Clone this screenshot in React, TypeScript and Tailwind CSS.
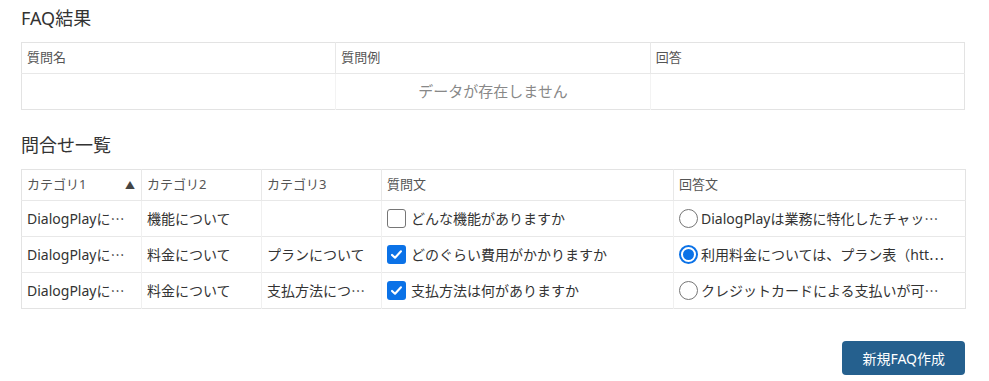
import React from "react";

const font = { fontFamily: '"Noto Sans", "Noto Sans CJK JP", sans-serif' };

interface Inquiry {
  cat1: string;
  cat2: string;
  cat3: string;
  question: string;
  answer: string;
  qChecked: boolean;
  aChecked: boolean;
}

const rows: Inquiry[] = [
  {
    cat1: "DialogPlayに⋯",
    cat2: "機能について",
    cat3: "",
    question: "どんな機能がありますか",
    answer: "DialogPlayは業務に特化したチャッ⋯",
    qChecked: false,
    aChecked: false,
  },
  {
    cat1: "DialogPlayに⋯",
    cat2: "料金について",
    cat3: "プランについて",
    question: "どのぐらい費用がかかりますか",
    answer: "利用料金については、プラン表（htt⋯",
    qChecked: true,
    aChecked: true,
  },
  {
    cat1: "DialogPlayに⋯",
    cat2: "料金について",
    cat3: "支払方法につ⋯",
    question: "支払方法は何がありますか",
    answer: "クレジットカードによる支払いが可⋯",
    qChecked: true,
    aChecked: false,
  },
];

const Checkbox = ({ checked }: { checked: boolean }) =>
  checked ? (
    <span className="w-[19px] h-[19px] rounded-[3px] bg-[#0b72e7] flex items-center justify-center shrink-0">
      <svg width="13" height="13" viewBox="0 0 16 16">
        <path d="M2.5 8.5 L6.2 12 L13.5 4" fill="none" stroke="#fff" strokeWidth="2.6" strokeLinecap="round" strokeLinejoin="round" />
      </svg>
    </span>
  ) : (
    <span className="w-[19px] h-[19px] rounded-[3px] border border-[#767676] bg-white shrink-0" />
  );

const Radio = ({ checked }: { checked: boolean }) =>
  checked ? (
    <span className="w-[19px] h-[19px] rounded-full border-2 border-[#0b72e7] bg-white flex items-center justify-center shrink-0">
      <span className="w-[11px] h-[11px] rounded-full bg-[#0b72e7]" />
    </span>
  ) : (
    <span className="w-[19px] h-[19px] rounded-full border border-[#767676] bg-white shrink-0" />
  );

export default function App() {
  return (
    <div className="w-[989px] h-[381px] bg-white text-[#333] px-[21px] pt-[5px]" style={font}>
      <h2 className="text-[18px] leading-[26px] text-[#333]">FAQ結果</h2>
      <table className="mt-[11px] w-[944px] table-fixed border-collapse border border-[#e3e3e3]">
        <thead>
          <tr className="h-[31px] text-[13px] text-[#555] text-left">
            <th className="font-normal px-[5px] border-b border-r border-[#e8e8e8]">質問名</th>
            <th className="font-normal px-[5px] border-b border-r border-[#e8e8e8]">質問例</th>
            <th className="font-normal px-[5px] border-b border-[#e8e8e8]">回答</th>
          </tr>
        </thead>
        <tbody>
          <tr className="h-[36px]">
            <td className="border-r border-[#f3f3f3]" />
            <td className="border-r border-[#f3f3f3] text-[15px] text-[#888] text-center">
              データが存在しません
            </td>
            <td />
          </tr>
        </tbody>
      </table>

      <h2 className="mt-[22px] text-[18px] leading-[26px] text-[#333]">問合せ一覧</h2>
      <table className="mt-[11px] w-[944px] table-fixed border-collapse border border-[#e3e3e3]">
        <colgroup>
          <col className="w-[120px]" />
          <col className="w-[120px]" />
          <col className="w-[120px]" />
          <col className="w-[292px]" />
          <col className="w-[292px]" />
        </colgroup>
        <thead>
          <tr className="h-[31px] text-[13px] text-[#555] text-left">
            <th className="font-normal px-[5px] border-b border-r border-[#e8e8e8]">
              <div className="flex items-center justify-between">
                <span>カテゴリ1</span>
                <span className="text-[10px] text-[#444] mr-[1px]">▲</span>
              </div>
            </th>
            <th className="font-normal px-[5px] border-b border-r border-[#e8e8e8]">カテゴリ2</th>
            <th className="font-normal px-[5px] border-b border-r border-[#e8e8e8]">カテゴリ3</th>
            <th className="font-normal px-[5px] border-b border-r border-[#e8e8e8]">質問文</th>
            <th className="font-normal px-[5px] border-b border-[#e8e8e8]">回答文</th>
          </tr>
        </thead>
        <tbody className="text-[14px] text-[#333]">
          {rows.map((r, i) => (
            <tr key={i} className={`h-[36px] ${i < rows.length - 1 ? "border-b border-[#e8e8e8]" : ""}`}>
              <td className="px-[5px] border-r border-[#f0f0f0] whitespace-nowrap overflow-hidden">{r.cat1}</td>
              <td className="px-[5px] border-r border-[#f0f0f0] whitespace-nowrap overflow-hidden">{r.cat2}</td>
              <td className="px-[5px] border-r border-[#f0f0f0] whitespace-nowrap overflow-hidden">{r.cat3}</td>
              <td className="px-[5px] border-r border-[#f0f0f0]">
                <div className="flex items-center gap-[5px] whitespace-nowrap">
                  <Checkbox checked={r.qChecked} />
                  <span>{r.question}</span>
                </div>
              </td>
              <td className="px-[5px]">
                <div className="flex items-center gap-[3px] whitespace-nowrap overflow-hidden">
                  <Radio checked={r.aChecked} />
                  <span>{r.answer}</span>
                </div>
              </td>
            </tr>
          ))}
        </tbody>
      </table>

      <div className="flex justify-end mt-[32px] w-[944px]">
        <button className="h-[34px] px-[20px] rounded-[4px] bg-[#25608e] text-white text-[14px]">
          新規FAQ作成
        </button>
      </div>
    </div>
  );
}
